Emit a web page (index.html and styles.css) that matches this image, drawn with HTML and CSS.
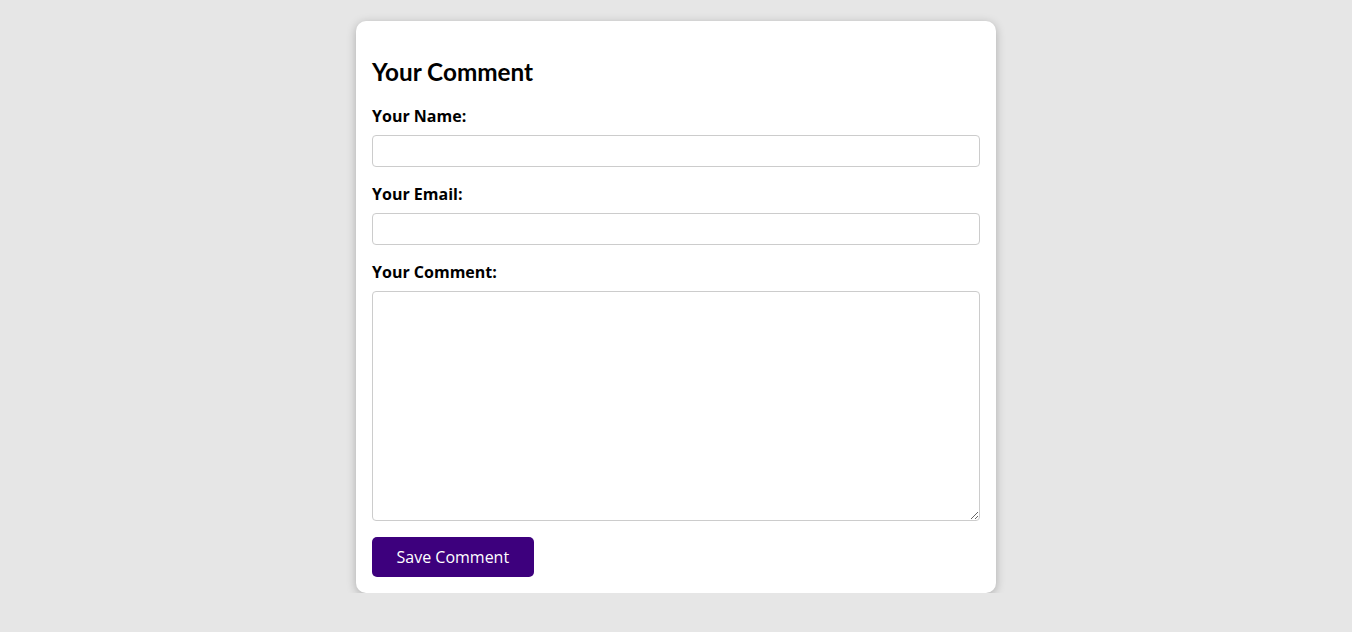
FILE: index.html
```html
<!DOCTYPE html>
<html lang="en">
<head>
<meta charset="utf-8">
<title>Your Comment</title>
<link rel="stylesheet" href="styles.css">
</head>
<body>
<div class="card">
  <h2 class="title">Your Comment</h2>
  <form class="form">
    <label class="label" for="name">Your Name:</label>
    <input class="field" type="text" id="name">
    <label class="label" for="email">Your Email:</label>
    <input class="field" type="email" id="email">
    <label class="label" for="comment">Your Comment:</label>
    <textarea class="field area" id="comment"></textarea>
    <div class="actions">
      <button class="btn" type="button">Save Comment</button>
    </div>
  </form>
</div>
</body>
</html>
```
FILE: styles.css
```css
html, body {
  margin: 0;
  padding: 0;
  background: #e6e6e6;
}
body {
  padding-top: 21px;
  font-family: "Open Sans", "Liberation Sans", sans-serif;
  color: #000;
}
.card {
  width: 640px;
  box-sizing: border-box;
  margin: 0 auto;
  background: #fff;
  border-radius: 10px;
  padding: 16px;
  box-shadow: 0 2px 10px rgba(0, 0, 0, 0.25);
}
.title {
  font-family: Lato, "Open Sans", sans-serif;
  font-weight: 700;
  font-size: 24.3px;
  margin: 19.9px 0 19.9px;
}
.form {
  display: flex;
  flex-direction: column;
}
.label {
  display: block;
  font-weight: 700;
  font-size: 16px;
  margin-top: -1px;
  margin-bottom: 8px;
}
.field {
  display: block;
  box-sizing: border-box;
  width: 100%;
  height: 32px;
  border: 1px solid #ccc;
  border-radius: 4px;
  padding: 6px 8px;
  font-family: "Open Sans", sans-serif;
  font-size: 14px;
  margin: 0 0 17px;
  background: #fff;
}
.area {
  height: 230px;
  resize: vertical;
  margin-bottom: 16px;
}
.actions {
  display: flex;
}
.btn {
  height: 40px;
  padding: 0 24.5px;
  background: #3d007d;
  color: #fff;
  border: none;
  border-radius: 5px;
  font-family: "Open Sans", sans-serif;
  font-size: 16px;
  cursor: pointer;
}
```
